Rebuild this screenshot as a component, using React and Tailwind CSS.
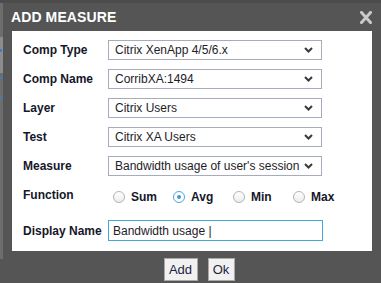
import React from "react";

const font = { fontFamily: '"Liberation Sans", Arial, sans-serif' };

function Chevron() {
  return (
    <svg width="9" height="6" viewBox="0 0 9 6" className="shrink-0">
      <path d="M1 1 L4.5 4.5 L8 1" fill="none" stroke="#3a3a3a" strokeWidth="2" />
    </svg>
  );
}

function SelectBox({ value }) {
  return (
    <div className="flex h-[20px] w-[214px] items-center justify-between border border-[#a7acbd] bg-white pl-[6px] pr-[8px] text-[12px] text-[#1d1d28]">
      <span className="whitespace-nowrap leading-none">{value}</span>
      <Chevron />
    </div>
  );
}

function Row({ label, children }) {
  return (
    <div className="flex items-center">
      <div className="w-[85px] shrink-0 text-[12px] font-bold text-[#15172a]">{label}</div>
      {children}
    </div>
  );
}

function Radio({ label, checked }) {
  return (
    <div className="flex w-[60px] items-center gap-[6px]">
      <span
        className={
          checked
            ? "flex h-[12px] w-[12px] items-center justify-center rounded-full border border-[#4aa3dc] bg-white"
            : "h-[12px] w-[12px] rounded-full border border-[#b4b4b4] bg-gradient-to-b from-white to-[#ececec]"
        }
      >
        {checked && <span className="h-[4px] w-[4px] rounded-full bg-[#3d9ad8]" />}
      </span>
      <span className="text-[12px] font-bold text-[#15172a]">{label}</span>
    </div>
  );
}

export default function App() {
  return (
    <div className="flex h-[283px] w-[381px] flex-col overflow-hidden bg-[#555555]" style={font}>
      <div className="h-[3px] bg-[#4c4c4c]" />
      <div className="flex flex-1">
        <div className="flex w-[3px] flex-col bg-[#6d6d6d]">
          <div className="h-[34px]" />
          <div className="h-[36px] bg-[#8c8c8c]">
            <div className="mt-[12px] h-[3px] w-[2px] bg-[#3b7fc4]" />
          </div>
          <div className="mt-[4px] h-[2px] w-[2px] bg-[#3b7fc4]" />
          <div className="mt-[18px] h-[2px] w-[2px] bg-[#3b7fc4]" />
          <div className="h-[160px]" />
          <div className="flex-1 bg-[#555555]" />
        </div>
        <div className="flex flex-1 flex-col">
          <div className="flex h-[28px] items-center justify-between pl-[8px] pr-[9px]">
            <span className="text-[14px] font-bold tracking-[0.1px] text-white">ADD MEASURE</span>
            <svg width="12" height="13" viewBox="0 0 12 13">
              <path d="M1.5 1.5 L10.5 11.5 M10.5 1.5 L1.5 11.5" stroke="#cacaca" strokeWidth="3" strokeLinecap="square" />
            </svg>
          </div>
          <div className="ml-[9px] mr-[9px] flex flex-col bg-white pb-[10px] pl-[11px] pt-[9px]">
            <div className="flex flex-col gap-[9px]">
              <Row label="Comp Type"><SelectBox value="Citrix XenApp 4/5/6.x" /></Row>
              <Row label="Comp Name"><SelectBox value="CorribXA:1494" /></Row>
              <Row label="Layer"><SelectBox value="Citrix Users" /></Row>
              <Row label="Test"><SelectBox value="Citrix XA Users" /></Row>
              <Row label="Measure"><SelectBox value="Bandwidth usage of user's session" /></Row>
            </div>
            <div className="mt-[9px] flex h-[20px] items-center">
              <div className="w-[85px] shrink-0 text-[12px] font-bold text-[#15172a]">Function</div>
              <div className="ml-[5px] mt-[3px] flex items-center">
                <Radio label="Sum" />
                <Radio label="Avg" checked />
                <Radio label="Min" />
                <Radio label="Max" />
              </div>
            </div>
            <div className="mt-[15px] flex items-center">
              <div className="w-[85px] shrink-0 text-[12px] font-bold text-[#15172a]">Display Name</div>
              <div className="flex h-[21px] w-[215px] items-center border border-[#45a6d8] bg-white pl-[4px] text-[12px] text-[#1d1d28]">
                <span className="whitespace-pre">Bandwidth usage |</span>
              </div>
            </div>
          </div>
          <div className="flex justify-center gap-[10px] pl-[14px] pt-[7px]">
            <button className="h-[23px] w-[34px] border border-[#a9a9a9] bg-[#f1f1f1] text-[13px] text-[#1b2442]">Add</button>
            <button className="h-[23px] w-[27px] border border-[#a9a9a9] bg-[#f1f1f1] text-[13px] text-[#1b2442]">Ok</button>
          </div>
        </div>
      </div>
    </div>
  );
}
